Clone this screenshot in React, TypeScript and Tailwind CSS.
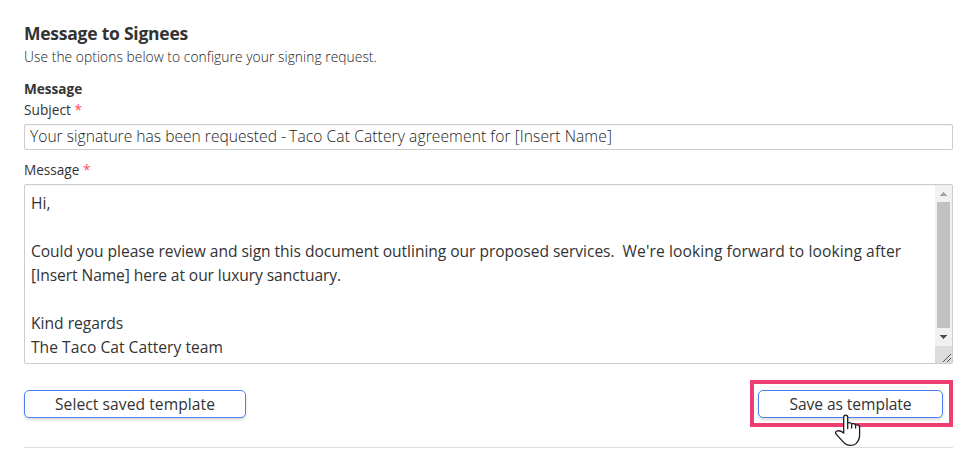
function Required() {
  return <span className="text-[#ff4a5e]"> *</span>;
}

function HandCursor() {
  return (
    <svg
      className="absolute left-[77px] top-[24px] h-[34px] w-[27px]"
      viewBox="0 0 27 34"
      fill="white"
      stroke="#1c1c28"
      strokeWidth="1.3"
      strokeLinecap="round"
      strokeLinejoin="round"
    >
      <path d="M8.7 19V3.2C8.7 0.3 12.7 0.3 12.7 3.2V9.2C13.5 8.2 16 8.3 16.6 10.1C17.6 9.2 20 9.5 20.6 11.2C21.8 10.4 24.6 11 24.6 13.2V21C24.6 24.5 23.3 27.3 21 29.6C18.7 32 12.4 32 9.8 29.6L1.3 20.4C0 18.6 0.6 17.2 2.6 16.8C5 16.4 7 17.6 8.7 19Z" />
      <path d="M12.7 9V14.5M16.6 10.4V14M20.6 11.4V14" fill="none" />
    </svg>
  );
}

function ScrollBar() {
  return (
    <div className="flex w-[17px] shrink-0 flex-col items-center bg-[#f1f1f1]">
      <div className="flex h-[17px] items-center justify-center">
        <svg className="h-[4px] w-[7px]" viewBox="0 0 7 4" fill="#a3a3a3" shapeRendering="crispEdges">
          <path d="M3 0H4V1H5V2H6V3H7V4H0V3H1V2H2V1H3Z" />
        </svg>
      </div>
      <div className="h-[126px] w-[13px] bg-[#c1c1c1]" />
      <div className="flex h-[18px] items-center justify-center">
        <svg className="h-[4px] w-[7px]" viewBox="0 0 7 4" fill="#505050" shapeRendering="crispEdges">
          <path d="M0 0H7V1H6V2H5V3H4V4H3V3H2V2H1V1H0Z" />
        </svg>
      </div>
      <div className="flex w-full grow items-end justify-end bg-[#dcdcdc] pb-px pr-px">
        <svg className="h-[8px] w-[8px]" viewBox="0 0 8 8" stroke="#505050" strokeWidth="1">
          <path d="M0 8L8 0M4 8L8 4" />
        </svg>
      </div>
    </div>
  );
}

export default function App() {
  return (
    <main className="flex h-[449px] w-[970px] flex-col overflow-hidden bg-white pl-6 pr-[17px] pt-[21px] font-['Open_Sans',sans-serif] text-[#333333]">
      <h1 className="text-[17.5px] font-bold leading-6 tracking-[-0.24px]">Message to Signees</h1>
      <p className="mt-[2px] text-[13.8px] font-light leading-5 tracking-[0.05px] text-[#1c1c1c]">
        Use the options below to configure your signing request.
      </p>
      <h2 className="mt-3 text-[13.6px] font-bold leading-5">Message</h2>
      <label className="mt-px text-[13.7px] leading-5">
        Subject<Required />
      </label>
      <div className="mt-1 h-[26px] whitespace-nowrap rounded-[2px] border border-[#cccccc] pl-[5px] text-[15.6px] font-light leading-[22px] tracking-[0.05px] text-[#1c1c1c] shadow-[inset_0_1px_1px_rgba(0,0,0,0.04)]">
        <span className="tracking-[0.01px]">Your signature has been requested - </span>
        <span className="-ml-px tracking-[0.09px]">Taco Cat Cattery agreement for [Insert Name]</span>
      </div>
      <label className="mt-[10px] text-[13.6px] leading-5">
        Message<Required />
      </label>
      <div className="mt-1 flex h-[180px] rounded-[2px] border border-[#cccccc] shadow-[inset_0_1px_1px_rgba(0,0,0,0.04)]">
        <div className="grow whitespace-pre pl-[6px] pt-[6px] text-[15.6px] leading-6">
          <p>Hi,</p>
          <p className="mt-6">
            <span className="tracking-[-0.05px]">Could you please review and sign this document outlining our proposed services.{"  "}</span>
            <span className="tracking-[0.1px]">We're looking forward to looking after</span>
          </p>
          <p className="tracking-[-0.085px]">[Insert Name] here at our luxury sanctuary.</p>
          <p className="mt-6">Kind regards</p>
          <p className="tracking-[0.03px]">The Taco Cat Cattery team</p>
        </div>
        <ScrollBar />
      </div>
      <div className="mt-4 flex items-center justify-between">
        <button className="h-7 w-[222px] rounded-[5px] border border-[#4d7ff5] bg-white text-[15.6px] leading-[26px] tracking-[0.07px] shadow-[0_2px_3px_rgba(0,0,0,0.15)]">
          Select saved template
        </button>
        <div className="h-[47px] w-[203px] border-4 border-[#ee3d6f] pl-1 pt-[6px]">
          <div className="relative w-[185px]">
            <button className="block h-7 w-full rounded-[5px] border border-[#4d7ff5] bg-white text-[15.6px] leading-[26px] tracking-[-0.07px] shadow-[0_2px_3px_rgba(0,0,0,0.15)]">
              Save as template
            </button>
            <HandCursor />
          </div>
        </div>
      </div>
      <hr className="mt-5 border-t border-[#dddddd]" />
    </main>
  );
}
